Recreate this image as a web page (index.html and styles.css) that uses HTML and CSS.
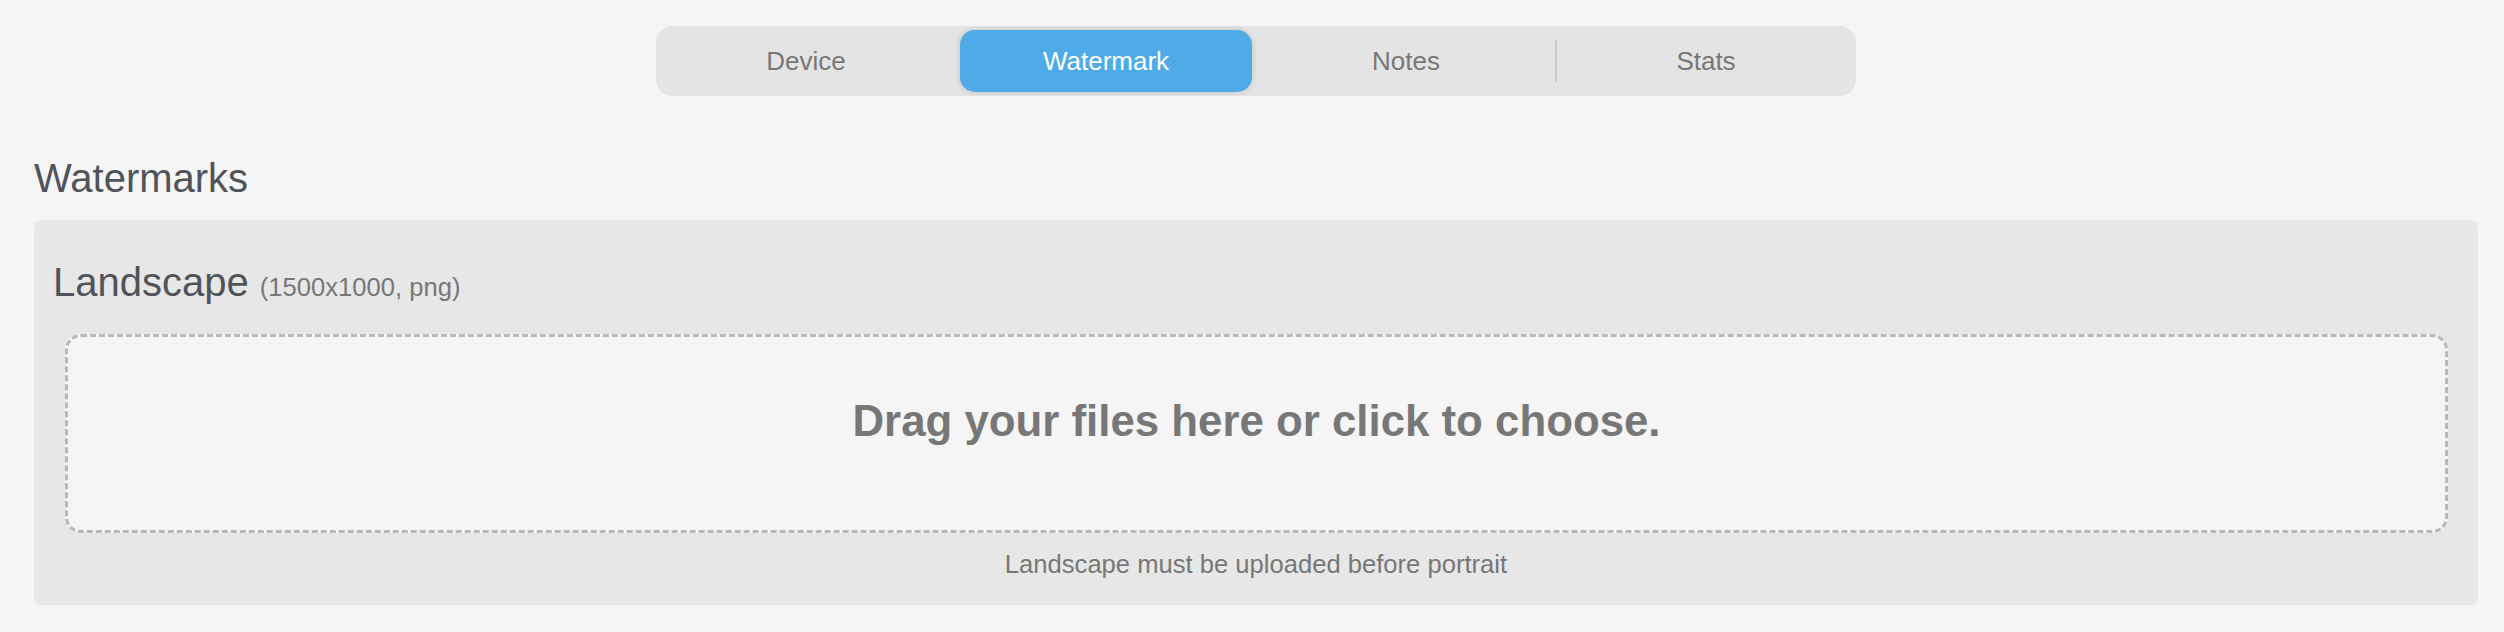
FILE: index.html
```html
<!DOCTYPE html>
<html lang="en">
<head>
<meta charset="utf-8">
<title>Watermarks</title>
<link rel="stylesheet" href="styles.css">
</head>
<body>
<div class="page">
  <nav class="tabs">
    <div class="tab">Device</div>
    <div class="tab active">Watermark</div>
    <div class="tab">Notes</div>
    <div class="sep"></div>
    <div class="tab">Stats</div>
  </nav>

  <h1 class="heading">Watermarks</h1>

  <section class="card">
    <h2 class="card-title">Landscape <span class="dims">(1500x1000, png)</span></h2>
    <div class="dropzone">
      <p class="drop-text">Drag your files here or click to choose.</p>
    </div>
    <p class="note">Landscape must be uploaded before portrait</p>
  </section>
</div>
</body>
</html>
```

FILE: styles.css
```css
html, body {
  margin: 0;
  padding: 0;
  background: #f5f5f5;
}

body {
  font-family: "Liberation Sans", Arial, Helvetica, sans-serif;
  color: #777777;
}

.page {
  padding: 26px 26px 0 34px;
}

.tabs {
  width: 1200px;
  height: 70px;
  margin: 0 auto;
  background: #e4e4e4;
  border-radius: 16px;
  display: flex;
  align-items: stretch;
  box-sizing: border-box;
}

.tab {
  flex: 1 1 0;
  margin: 4px;
  border-radius: 15px;
  display: flex;
  align-items: center;
  justify-content: center;
  font-size: 26px;
  color: #777777;
}

.tab.active {
  background: #4eabe8;
  color: #ffffff;
  box-shadow: 0 0 6px rgba(0, 0, 0, 0.16);
}

.sep {
  flex: 0 0 2px;
  width: 2px;
  height: 42px;
  align-self: center;
  margin: 0 -1px;
  background: #c9c9c9;
}

.heading {
  margin: 60px 0 19px 0;
  font-size: 40px;
  line-height: 45px;
  font-weight: normal;
  color: #505459;
}

.card {
  background: #e7e7e7;
  border-radius: 8px;
  padding: 40px 19px 26px 19px;
}

.card-title {
  margin: 0;
  font-size: 40px;
  line-height: 45px;
  font-weight: normal;
  color: #505459;
}

.dims {
  font-size: 25.6px;
  line-height: 1;
  color: #777777;
}

.dropzone {
  margin: 29px 11px 0 12px;
  border: 3px dashed #b9b9b9;
  border-radius: 16px;
  background: #f5f5f5;
  padding: 59px 20px 84px 20px;
}

.drop-text {
  margin: 0;
  text-align: center;
  font-size: 43.8px;
  line-height: 50px;
  font-weight: bold;
  color: #777777;
}

.note {
  margin: 16px 0 0 0;
  text-align: center;
  font-size: 25.6px;
  line-height: 30px;
  color: #777777;
}
```
